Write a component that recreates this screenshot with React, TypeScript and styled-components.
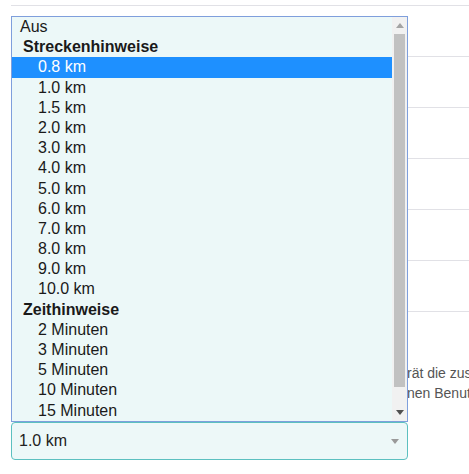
import React from 'react';
import styled, { createGlobalStyle } from 'styled-components';

const GlobalStyle = createGlobalStyle`
    html, body {
        margin: 0;
        padding: 0;
        background: #ffffff;
        overflow: hidden;
    }
    body {
        font-family: "Liberation Sans", Arial, sans-serif;
    }
`;

const Page = styled.div`
    padding: 5px 0 0 11px;
    width: 469px;
    height: 474px;
    box-sizing: border-box;
    overflow: hidden;
`;

const SettingRow = styled.div`
    height: 51px;
    box-sizing: border-box;
    border-top: 1px solid #e1e1e6;
`;

const HintSection = styled.div`
    border-top: 1px solid #e1e1e6;
    padding-top: 51px;
`;

const HintLine = styled.div`
    display: flex;
    width: 458px;
    overflow: hidden;
    font-size: 14px;
    line-height: 20px;
    color: #555;
    white-space: nowrap;
`;

// the start of each hint line sits under the open listbox
const HintLead = styled.span`
    width: 396px;
    flex: none;
`;

const SelectWrap = styled.div`
    position: relative;
    width: 397px;
    margin-top: 19px;
`;

const SelectBox = styled.div`
    height: 38px;
    box-sizing: border-box;
    border: 1px solid #5cc0c0;
    border-radius: 4px;
    background: #edf8f8;
    display: flex;
    align-items: center;
    justify-content: space-between;
    padding: 0 8px 0 7px;
    font-size: 16px;
    color: #222;
`;

const Caret = styled.span<{ $color: string; $up?: boolean }>`
    width: 0;
    height: 0;
    border-left: 4px solid transparent;
    border-right: 4px solid transparent;
    ${(p) => (p.$up ? `border-bottom: 5px solid ${p.$color};` : `border-top: 5px solid ${p.$color};`)}
`;

const Listbox = styled.div`
    position: absolute;
    left: 0;
    bottom: 100%;
    width: 397px;
    height: 406px;
    box-sizing: border-box;
    border: 1px solid #7f9fdc;
    background: #ecf8f8;
    display: flex;
`;

const Options = styled.div`
    flex: 1;
    overflow: hidden;
`;

const Option = styled.div<{ $indent: number; $selected?: boolean; $group?: boolean }>`
    height: 20.2px;
    line-height: 19.6px;
    padding-left: ${(p) => p.$indent}px;
    font-size: 16px;
    font-weight: ${(p) => (p.$group ? 700 : 400)};
    color: ${(p) => (p.$selected ? '#ffffff' : '#1a1a1a')};
    background: ${(p) => (p.$selected ? '#1e90ff' : 'transparent')};
    white-space: nowrap;
`;

const Scrollbar = styled.div`
    width: 15px;
    background: #f1f1f1;
    display: flex;
    flex-direction: column;
`;

const ScrollButton = styled.div`
    height: 17px;
    display: flex;
    align-items: center;
    justify-content: center;
`;

const Track = styled.div`
    flex: 1;
    padding: 0 2px;
`;

const Thumb = styled.div`
    background: #c1c1c1;
`;

type Item = { label: string; kind: 'plain' | 'group' | 'option' };

const items: Item[] = [
    { label: 'Aus', kind: 'plain' },
    { label: 'Streckenhinweise', kind: 'group' },
    ...['0.8', '1.0', '1.5', '2.0', '3.0', '4.0', '5.0', '6.0', '7.0', '8.0', '9.0', '10.0'].map(
        (v) => ({ label: `${v} km`, kind: 'option' as const })
    ),
    { label: 'Zeithinweise', kind: 'group' },
    ...['2', '3', '5', '10', '15'].map((v) => ({ label: `${v} Minuten`, kind: 'option' as const })),
];

const indents = { plain: 8, group: 11, option: 26 };

export default function App() {
    const selected = '0.8 km';

    return (
        <>
            <GlobalStyle />
            <Page>
                <SettingRow />
                <SettingRow />
                <SettingRow />
                <SettingRow />
                <SettingRow />
                <SettingRow />
                <HintSection>
                    <HintLine>
                        <HintLead />
                        <span>rät die zusätzlichen Informationen aus.</span>
                    </HintLine>
                    <HintLine>
                        <HintLead />
                        <span>nen Benutzerdefinierten Einstellungen.</span>
                    </HintLine>
                </HintSection>
                <SelectWrap>
                    <Listbox>
                        <Options>
                            {items.map((item) => (
                                <Option
                                    key={item.label}
                                    $indent={indents[item.kind]}
                                    $group={item.kind === 'group'}
                                    $selected={item.label === selected}
                                >
                                    {item.label}
                                </Option>
                            ))}
                        </Options>
                        <Scrollbar>
                            <ScrollButton>
                                <Caret $up $color="#a3a3a3" />
                            </ScrollButton>
                            <Track>
                                <Thumb style={{ height: 353 }} />
                            </Track>
                            <ScrollButton>
                                <Caret $color="#505050" />
                            </ScrollButton>
                        </Scrollbar>
                    </Listbox>
                    <SelectBox>
                        <span>1.0 km</span>
                        <Caret $color="#9a9a9a" />
                    </SelectBox>
                </SelectWrap>
            </Page>
        </>
    );
}
